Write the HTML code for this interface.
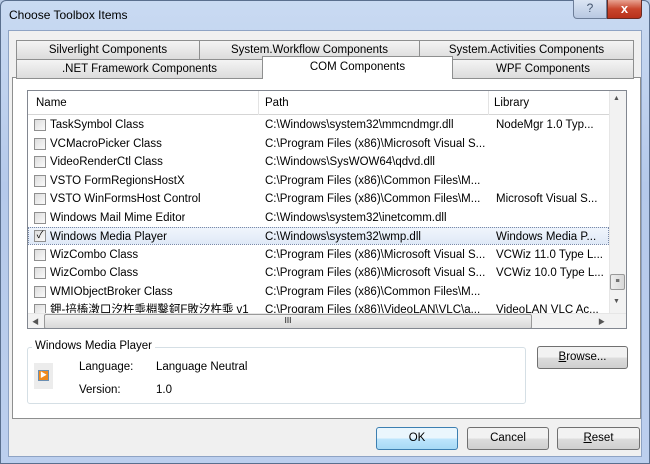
<!DOCTYPE html>
<html><head><style>
*{margin:0;padding:0;box-sizing:border-box}
body{width:650px;height:464px;overflow:hidden;font-family:"Liberation Sans","Noto Sans CJK SC",sans-serif;font-size:11.5px;color:#000;background:#b9cbe6;position:relative}
.a{position:absolute}
.frame{left:0;top:0;width:650px;height:464px;background:linear-gradient(#c9daf2,#b5c9ea 40%,#bccfee);border:1px solid #5a6f8e;border-radius:6px 6px 0 0}
.client{left:8px;top:30px;width:634px;height:427px;background:#f0f0f0;border:1px solid #8ea3c4}
.tab{height:20px;background:linear-gradient(#f4f4f4,#dcdcdc);border:1px solid #8e8f8f;text-align:center;line-height:18px;font-size:11.5px}
.panel{left:12px;top:77px;width:629px;height:342px;background:#fff;border:1px solid #8e8f8f}
.list{left:27px;top:90px;width:600px;height:239px;border:1px solid #828790;background:#fff;overflow:hidden}
.hdr{left:0;top:0;width:581px;height:24px;border-bottom:1px solid #d5d5d5;background:#fff}
.hdr span{position:absolute;top:6px}
.sep{position:absolute;top:0;width:1px;height:24px;background:#e3e3e3}
.row{position:absolute;left:0;width:581px;height:18px;line-height:18px;white-space:nowrap}
.row span{position:absolute;overflow:hidden}
.cb{position:absolute;left:6px;top:3px;width:12px;height:12px;border:1px solid #8f8f8f;background:linear-gradient(135deg,#ddd,#fafafa)}
.btn{height:23px;border:1px solid #707070;border-radius:3px;background:linear-gradient(#f2f2f2 50%,#dddddd 50%,#cfcfcf);text-align:center;line-height:21px}
</style></head><body>
<div class="a frame"></div>
<div class="a" style="left:9px;top:8px;font-size:12px">Choose Toolbox Items</div>
<div class="a" style="left:573px;top:0;width:34px;height:19px;border:1px solid #6d7e99;border-top:none;border-radius:0 0 0 4px;background:linear-gradient(#dbe5f3,#b8c8e2);text-align:center;color:#44566f;font-size:12px;line-height:17px">?</div>
<div class="a" style="left:607px;top:0;width:35px;height:19px;border:1px solid #6a2a22;border-top:none;border-radius:0 0 4px 0;background:linear-gradient(#e8a493,#c9452c 50%,#b8321c);text-align:center;color:#fff;font-weight:bold;font-size:13px;line-height:17px">x</div>
<div class="a client"></div>
<div class="a tab" style="left:16px;top:40px;width:184px">Silverlight Components</div>
<div class="a tab" style="left:199px;top:40px;width:221px">System.Workflow Components</div>
<div class="a tab" style="left:419px;top:40px;width:215px">System.Activities Components</div>
<div class="a panel"></div>
<div class="a tab" style="left:16px;top:59px;width:247px">.NET Framework Components</div>
<div class="a tab" style="left:452px;top:59px;width:182px">WPF Components</div>
<div class="a" style="left:262px;top:56px;width:191px;height:23px;background:#fff;border:1px solid #8e8f8f;border-bottom:none;text-align:center;line-height:20px">COM Components</div>
<div class="a list">
 <div class="a hdr"><span style="left:8px">Name</span><span style="left:237px">Path</span><span style="left:466px">Library</span>
 <div class="sep" style="left:230px"></div><div class="sep" style="left:460px"></div></div>
 <div class="row" style="top:25px"><div class="cb"></div><span style="left:22px">TaskSymbol Class</span><span style="left:237px">C:\Windows\system32\mmcndmgr.dll</span><span style="left:468px">NodeMgr 1.0 Typ...</span></div>
 <div class="row" style="top:43.5px"><div class="cb"></div><span style="left:22px">VCMacroPicker Class</span><span style="left:237px">C:\Program Files (x86)\Microsoft Visual S...</span></div>
 <div class="row" style="top:62px"><div class="cb"></div><span style="left:22px">VideoRenderCtl Class</span><span style="left:237px">C:\Windows\SysWOW64\qdvd.dll</span></div>
 <div class="row" style="top:80.5px"><div class="cb"></div><span style="left:22px">VSTO FormRegionsHostX</span><span style="left:237px">C:\Program Files (x86)\Common Files\M...</span></div>
 <div class="row" style="top:99px"><div class="cb"></div><span style="left:22px">VSTO WinFormsHost Control</span><span style="left:237px">C:\Program Files (x86)\Common Files\M...</span><span style="left:468px">Microsoft Visual S...</span></div>
 <div class="row" style="top:117.5px"><div class="cb"></div><span style="left:22px">Windows Mail Mime Editor</span><span style="left:237px">C:\Windows\system32\inetcomm.dll</span></div>
 <div class="row" style="top:136px;background:linear-gradient(#f0f5fc,#dfe9f7);border:1px dotted #7a8aa8"><div class="cb" style="top:2px;left:5px;font-size:10px;line-height:10px;text-align:center">✓</div><span style="left:21px">Windows Media Player</span><span style="left:236px">C:\Windows\system32\wmp.dll</span><span style="left:467px">Windows Media P...</span></div>
 <div class="row" style="top:154.5px"><div class="cb"></div><span style="left:22px">WizCombo Class</span><span style="left:237px">C:\Program Files (x86)\Microsoft Visual S...</span><span style="left:468px">VCWiz 11.0 Type L...</span></div>
 <div class="row" style="top:173px"><div class="cb"></div><span style="left:22px">WizCombo Class</span><span style="left:237px">C:\Program Files (x86)\Microsoft Visual S...</span><span style="left:468px">VCWiz 10.0 Type L...</span></div>
 <div class="row" style="top:191.5px"><div class="cb"></div><span style="left:22px">WMIObjectBroker Class</span><span style="left:237px">C:\Program Files (x86)\Common Files\M...</span></div>
 <div class="row" style="top:210px"><div class="cb"></div><span style="left:22px">鉀-掊槒潡口汐杵埀棩鑿鈳F敗汐杵埀 v1</span><span style="left:237px">C:\Program Files (x86)\VideoLAN\VLC\a...</span><span style="left:468px">VideoLAN VLC Ac...</span></div>
 <div class="a" style="left:581px;top:0;width:17px;height:222px;background:#f2f2f2;border-left:1px solid #e6e6e6"></div>
 <div class="a" style="left:585px;top:4px;font-size:7px;color:#555">▲</div>
 <div class="a" style="left:585px;top:207px;font-size:7px;color:#555">▼</div>
 <div class="a" style="left:582px;top:183px;width:15px;height:16px;border:1px solid #999;border-radius:2px;background:linear-gradient(90deg,#eee,#d8d8d8);text-align:center;font-size:7px;line-height:13px">≡</div>
 <div class="a" style="left:0;top:222px;width:598px;height:17px;background:#f2f2f2;border-top:1px solid #e6e6e6"></div>
 <div class="a" style="left:16px;top:223px;width:488px;height:15px;border:1px solid #999;border-radius:2px;background:linear-gradient(#f2f2f2,#d8d8d8);text-align:center;font-size:8px;line-height:12px">III</div>
 <div class="a" style="left:4px;top:226px;font-size:7px;color:#555">◀</div>
 <div class="a" style="left:570px;top:226px;font-size:7px;color:#555">▶</div>
</div>
<div class="a" style="left:27px;top:347px;width:499px;height:57px;border:1px solid #d5dfe5;border-radius:3px"></div>
<div class="a" style="left:32px;top:340px;background:#fff;padding:0 3px">Windows Media Player</div>
<div class="a" style="left:34px;top:363px;width:19px;height:26px;background:#ececec"></div>
<div class="a" style="left:38px;top:370px;width:11px;height:11px;background:#f08a1d;border:1px solid #6b8fb3;color:#fff;font-size:7px;line-height:9px;text-align:center">▶</div>
<div class="a" style="left:79px;top:361px">Language:</div>
<div class="a" style="left:156px;top:361px">Language Neutral</div>
<div class="a" style="left:79px;top:384px">Version:</div>
<div class="a" style="left:156px;top:384px">1.0</div>
<div class="a btn" style="left:537px;top:346px;width:91px"><u>B</u>rowse...</div>
<div class="a btn" style="left:376px;top:427px;width:82px;border-color:#3c7fb1;background:linear-gradient(#eaf6fd 50%,#bee6fd 50%,#a7d9f5)">OK</div>
<div class="a btn" style="left:467px;top:427px;width:82px">Cancel</div>
<div class="a btn" style="left:557px;top:427px;width:83px"><u>R</u>eset</div>
</body></html>
